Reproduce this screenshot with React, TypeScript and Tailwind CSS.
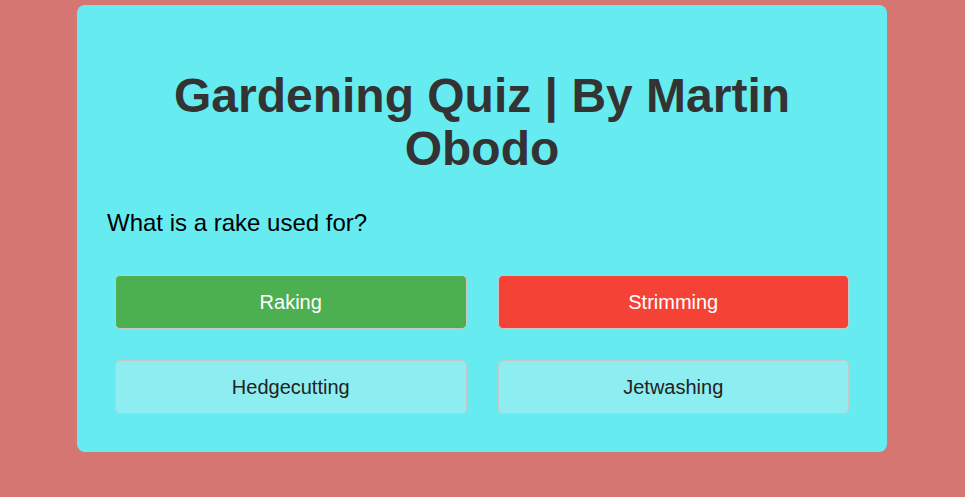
export default function App() {
  const answers = [
    { t: "Raking", cls: "bg-[#4caf50] text-white" },
    { t: "Strimming", cls: "bg-[#f44336] text-white" },
    { t: "Hedgecutting", cls: "bg-[#8eedf0] text-[#222]" },
    { t: "Jetwashing", cls: "bg-[#8eedf0] text-[#222]" },
  ];
  return (
    <div
      className="min-h-[497px] w-full bg-[#d57673] pt-[5px]"
      style={{ fontFamily: '"Liberation Sans", Arial, sans-serif' }}
    >
      <div className="ml-[77px] w-[810px] rounded-lg bg-[#66ecf0] p-[30px]">
        <h1 className="mt-[35px] text-center text-[48px] font-bold leading-[1.1] text-[#333]">
          Gardening Quiz | By Martin Obodo
        </h1>
        <p className="mt-[33px] text-[24px] leading-[1.15] text-black">What is a rake used for?</p>
        <div className="mt-[31px] grid grid-cols-2 gap-[15px]">
          {answers.map((a) => (
            <button
              key={a.t}
              className={`m-2 h-[54px] rounded-[5px] border border-[#c8c8c8] text-[20px] ${a.cls}`}
            >
              {a.t}
            </button>
          ))}
        </div>
      </div>
    </div>
  );
}
